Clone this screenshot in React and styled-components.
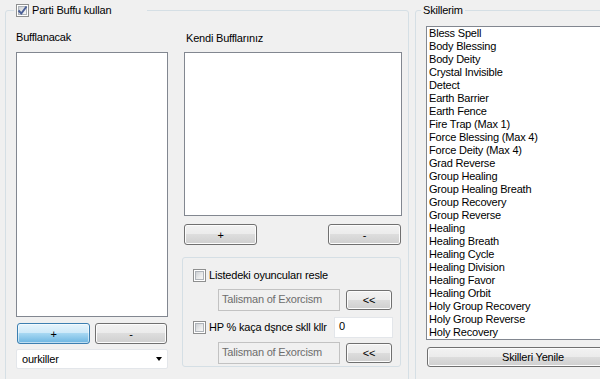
import React from "react";
import styled, { createGlobalStyle } from "styled-components";

const Global = createGlobalStyle`
  html, body { margin: 0; padding: 0; background: #f0f0f0; }
  body { font-family: "Liberation Sans", Arial, sans-serif; font-size: 11px; letter-spacing: -0.2px; color: #000; }
  * { box-sizing: border-box; }
`;

const Page = styled.div`
  display: flex;
  align-items: flex-start;
  gap: 6px;
  width: 600px;
  height: 379px;
  overflow: hidden;
  background: #f0f0f0;
  padding: 4px 0 0 5px;
`;

const GroupBox = styled.fieldset`
  margin: 0;
  flex-shrink: 0;
  min-width: 0;
  width: ${(p) => p.$w}px;
  height: 392px;
  border: 1px solid #d5dfe5;
  border-radius: 3px;
  padding: ${(p) => p.$pt}px 6px 0 10px;
`;

const Legend = styled.legend`
  display: flex;
  align-items: center;
  gap: 3px;
  height: 13px;
  line-height: 13px;
  padding: 0 2px;
  margin-left: ${(p) => p.$ml}px;
  width: ${(p) => (p.$w ? `${p.$w}px` : "auto")};
  white-space: nowrap;
`;

const Row = styled.div`
  display: flex;
  gap: ${(p) => p.$gap || 0}px;
  align-items: flex-start;
`;

const Column = styled.div`
  display: flex;
  flex-direction: column;
  width: ${(p) => p.$w}px;
  flex-shrink: 0;
`;

const Label = styled.div`
  line-height: 13px;
  height: 13px;
  white-space: nowrap;
  padding-left: ${(p) => p.$pl || 0}px;
  margin-top: ${(p) => p.$mt || 0}px;
  margin-bottom: ${(p) => p.$mb || 0}px;
`;

const ListBox = styled.div`
  width: ${(p) => p.$w}px;
  height: ${(p) => p.$h}px;
  margin-left: ${(p) => p.$ml || 0}px;
  background: #fff;
  border: 1px solid #828790;
  padding: 0 2px;
  overflow: hidden;
  flex-shrink: 0;
`;

const ListItem = styled.div`
  height: 13px;
  line-height: 13px;
  white-space: nowrap;
`;

const ButtonRow = styled.div`
  display: flex;
  justify-content: space-between;
  margin-top: ${(p) => p.$mt}px;
  padding: 0 ${(p) => p.$pr || 0}px 0 ${(p) => p.$pl || 0}px;
`;

const Button = styled.button`
  width: ${(p) => p.$w}px;
  height: ${(p) => p.$h || 21}px;
  margin: ${(p) => p.$m || 0};
  flex-shrink: 0;
  padding: 0;
  font-family: "Liberation Sans", Arial, sans-serif;
  font-size: 11px;
  letter-spacing: -0.2px;
  color: #000;
  border: 1px solid ${(p) => (p.$primary ? "#3c7fb1" : "#707070")};
  border-radius: 3px;
  box-shadow: inset 0 0 0 1px ${(p) => (p.$primary ? "rgba(255,255,255,0.55)" : "#fcfcfc")};
  background: ${(p) =>
    p.$primary
      ? "linear-gradient(#e6f4fc 0%, #cfeaf9 45%, #a6d7f2 50%, #6cb5e1 100%)"
      : "linear-gradient(#f2f2f2 0%, #ebebeb 50%, #dddddd 50%, #cfcfcf 100%)"};
  display: flex;
  align-items: center;
  justify-content: center;
  cursor: default;
`;

const Combo = styled.div`
  margin-top: 5px;
  height: 20px;
  width: 152px;
  background: #fff;
  border: 1px solid #e3e6ea;
  border-radius: 2px;
  display: flex;
  align-items: center;
  justify-content: space-between;
  padding: 0 5px 0 5px;
`;

const Arrow = styled.span`
  width: 0;
  height: 0;
  border-left: 3.5px solid transparent;
  border-right: 3.5px solid transparent;
  border-top: 4px solid #000;
`;

const InnerBox = styled.div`
  margin-top: 12px;
  width: 219px;
  height: 110px;
  border: 1px solid #d5dfe5;
  border-radius: 3px;
  padding: 11px 0 0 10px;
  display: flex;
  flex-direction: column;
`;

const CheckRow = styled.div`
  display: flex;
  align-items: center;
  margin-top: ${(p) => p.$mt || 0}px;
  height: ${(p) => p.$h || 13}px;
`;

const CheckText = styled.span`
  display: block;
  width: ${(p) => p.$w}px;
  white-space: nowrap;
  margin-left: 3px;
  line-height: 13px;
`;

const FieldRow = styled.div`
  display: flex;
  align-items: center;
  gap: 6px;
  margin-top: ${(p) => p.$mt}px;
  padding-left: 25px;
`;

const DisabledBox = styled.div`
  width: 122px;
  height: 22px;
  border: 1px solid #c2c2c2;
  background: #f0f0f0;
  color: #6d6d6d;
  padding: 0 3px;
  line-height: 18px;
  white-space: nowrap;
  flex-shrink: 0;
`;

const NumberBox = styled.div`
  width: 59px;
  height: 21px;
  margin-left: 8px;
  background: #fff;
  border: 1px solid #e3e6ea;
  padding: 0 4px;
  line-height: 17px;
`;

const Box = styled.span`
  width: 13px;
  height: 13px;
  flex-shrink: 0;
  border: 1px solid #8e8f8f;
  background: #fff;
  padding: 1px;
  display: flex;
`;

const BoxInner = styled.span`
  flex: 1;
  background: linear-gradient(135deg, #cdd0d4 0%, #e8e9ea 55%, #f7f7f7 100%);
  border: 1px solid #aeb3b9;
  display: flex;
  align-items: center;
  justify-content: center;
`;

function Check({ checked }) {
  return (
    <Box>
      <BoxInner>
        {checked && (
          <svg width="11" height="11" viewBox="0 0 11 11" style={{ margin: -2 }}>
            <path d="M1.5 5.5 L4.3 8.5 L9.5 1.5" fill="none" stroke="#4a5f97" strokeWidth="2" />
          </svg>
        )}
      </BoxInner>
    </Box>
  );
}

const skills = [
  "Bless Spell",
  "Body Blessing",
  "Body Deity",
  "Crystal Invisible",
  "Detect",
  "Earth Barrier",
  "Earth Fence",
  "Fire Trap (Max 1)",
  "Force Blessing (Max 4)",
  "Force Deity (Max 4)",
  "Grad Reverse",
  "Group Healing",
  "Group Healing Breath",
  "Group Recovery",
  "Group Reverse",
  "Healing",
  "Healing Breath",
  "Healing Cycle",
  "Healing Division",
  "Healing Favor",
  "Healing Orbit",
  "Holy Group Recovery",
  "Holy Group Reverse",
  "Holy Recovery",
];

export default function App() {
  return (
    <>
      <Global />
      <Page>
        <GroupBox $w={404} $pt={14}>
          <Legend $ml={-2} $w={133}>
            <Check checked />
            <span>Parti Buffu kullan</span>
          </Legend>
          <Row $gap={14}>
            <Column $w={152}>
              <Label $mb={8}>Bufflanacak</Label>
              <ListBox $w={152} $h={265} />
              <ButtonRow $mt={6} $pl={1} $pr={1}>
                <Button $primary $w={73}>+</Button>
                <Button $w={72}>-</Button>
              </ButtonRow>
              <Combo>
                <span>ourkiller</span>
                <Arrow />
              </Combo>
            </Column>
            <Column $w={220}>
              <Label $pl={4} $mt={1} $mb={7}>Kendi Bufflarınız</Label>
              <ListBox $w={218} $h={164} $ml={2} />
              <ButtonRow $mt={8} $pl={2} $pr={1}>
                <Button $w={73}>+</Button>
                <Button $w={73}>-</Button>
              </ButtonRow>
              <InnerBox>
                <CheckRow>
                  <Check />
                  <CheckText $w={120}>Listedeki oyuncuları resle</CheckText>
                </CheckRow>
                <FieldRow $mt={7}>
                  <DisabledBox>Talisman of Exorcism</DisabledBox>
                  <Button $w={46} $h={20}>&lt;&lt;</Button>
                </FieldRow>
                <CheckRow $mt={6} $h={21}>
                  <Check />
                  <CheckText $w={117}>HP % kaça dşnce skll kllr</CheckText>
                  <NumberBox>0</NumberBox>
                </CheckRow>
                <FieldRow $mt={4}>
                  <DisabledBox>Talisman of Exorcism</DisabledBox>
                  <Button $w={46} $h={20}>&lt;&lt;</Button>
                </FieldRow>
              </InnerBox>
            </Column>
          </Row>
        </GroupBox>
        <GroupBox $w={236} $pt={9}>
          <Legend $ml={-5}>Skillerim</Legend>
          <ListBox $w={214} $h={314}>
            {skills.map((s) => (
              <ListItem key={s}>{s}</ListItem>
            ))}
          </ListBox>
          <Button $w={212} $h={20} $m="7px 0 0 1px">Skilleri Yenile</Button>
        </GroupBox>
      </Page>
    </>
  );
}
